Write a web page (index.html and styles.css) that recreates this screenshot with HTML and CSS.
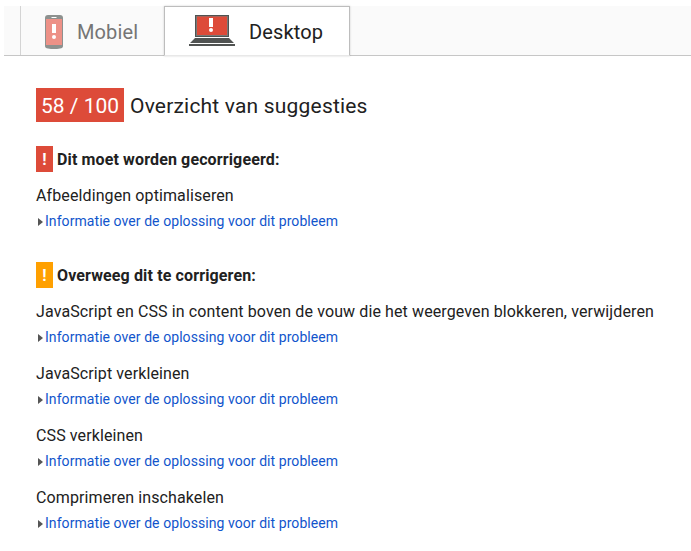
FILE: index.html
```html
<!DOCTYPE html>
<html lang="nl">
<head>
<meta charset="utf-8">
<title>PageSpeed Insights</title>
<link rel="stylesheet" href="styles.css">
</head>
<body>
<nav class="tabs">
  <div class="tab tab-mobile">
    <svg class="phone" width="18" height="34" viewBox="0 0 18 34">
      <path fill="#8d918f" d="M0 3Q0 0 3 0H15Q18 0 18 3V31Q18 33 15 33.5Q9 34.5 3 33.5Q0 33 0 31Z"/>
      <path fill="#ed9187" d="M1 4H17V30H1Z"/>
      <path fill="#fff" d="M6.5 2h5v1h-5zM7 9h4v9H7z"/>
      <circle cx="9" cy="22" r="2" fill="#fff"/>
    </svg>
    <span class="label">Mobiel</span>
  </div>
  <div class="tab tab-desktop">
    <svg class="laptop" width="46" height="31" viewBox="0 0 46 31">
      <path fill="#505352" d="M6 0H40V22H6ZM6 23H40L45 28H1ZM0 29H46V31H0Z"/>
      <path fill="#777977" d="M7 1H39V21H7Z"/>
      <path fill="#dd4b39" d="M8 1.5H38V20H8Z"/>
      <path fill="#fff" d="M20 3h4v9h-4z"/>
      <circle cx="22" cy="15" r="2" fill="#fff"/>
    </svg>
    <span class="label">Desktop</span>
  </div>
</nav>
<main class="results">
  <h2><span class="score">58 / 100</span><span class="overview">Overzicht van suggesties</span></h2>
  <section>
    <h3><span class="badge red">!</span><span class="group">Dit moet worden gecorrigeerd:</span></h3>
    <div class="rule"><p>Afbeeldingen optimaliseren</p><a><i></i><span>Informatie over de oplossing voor dit probleem</span></a></div>
  </section>
  <section>
    <h3><span class="badge orange">!</span><span class="group">Overweeg dit te corrigeren:</span></h3>
    <div class="rule"><p>JavaScript en CSS in content boven de vouw die het weergeven blokkeren, verwijderen</p><a><i></i><span>Informatie over de oplossing voor dit probleem</span></a></div>
    <div class="rule"><p>JavaScript verkleinen</p><a><i></i><span>Informatie over de oplossing voor dit probleem</span></a></div>
    <div class="rule"><p>CSS verkleinen</p><a><i></i><span>Informatie over de oplossing voor dit probleem</span></a></div>
    <div class="rule"><p>Comprimeren inschakelen</p><a><i></i><span>Informatie over de oplossing voor dit probleem</span></a></div>
  </section>
</main>
</body>
</html>
```
FILE: styles.css
```css
* { box-sizing: border-box; }
body { margin: 0; background: #fff; color: #212121; font-family: Roboto, sans-serif; overflow: hidden; }
h2, h3, p { margin: 0; font-weight: 400; white-space: nowrap; }
.tabs { display: flex; height: 50px; margin: 6px 0 0 4px; padding-left: 16px; background: #fafafa; border-bottom: 1px solid #c6c6c6; }
.tab { display: flex; align-items: flex-start; font-size: 20px; letter-spacing: .12px; }
.label { line-height: 24px; margin-top: 14px; }
.tab-mobile { width: 144px; border-left: 1px solid #d4d4d4; padding-left: 24px; color: #757575; }
.phone { margin: 9px 14px 0 0; }
.tab-desktop { width: 186px; height: 50px; padding-left: 24px; background: #fff; border: 1px solid #bdbdbd; border-bottom-color: #e8e8e8; box-shadow: 0 0 2px rgba(0, 0, 0, .18); }
.tab-desktop .label { margin-top: 13px; }
.laptop { margin: 8px 14px 0 0; }
.results { padding: 32px 36px 0; }
h2 { display: flex; height: 34px; margin-bottom: 24px; font-size: 21px; line-height: 36px; }
.score { width: 88px; margin-right: 6px; padding-left: 5px; background: #dd4b39; color: #fff; }
.overview { letter-spacing: .19px; }
section { margin-bottom: 28px; }
h3 { display: flex; height: 26px; font-size: 16px; line-height: 28px; font-weight: 700; letter-spacing: .13px; }
.badge { width: 17px; margin-right: 4px; color: #fff; text-align: center; }
.red { background: #dd4b39; }
.orange { background: #ffa000; }
.rule { margin-top: 10px; }
.rule p { height: 26px; font-size: 16px; line-height: 28px; letter-spacing: .11px; }
.rule a { display: flex; align-items: center; height: 26px; padding-left: 2px; color: #1155cc; font-size: 14px; line-height: 26px; letter-spacing: .065px; }
.rule i { width: 0; height: 0; margin: 1px 2px 0 0; border: solid transparent; border-width: 4px 0 4px 5px; border-left-color: #555; }
```
